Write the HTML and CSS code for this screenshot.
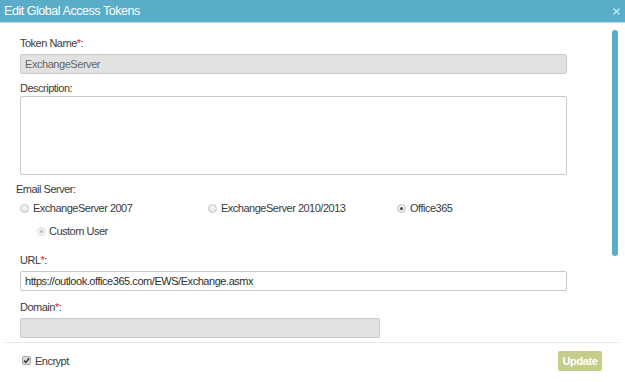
FILE: index.html
```html
<!DOCTYPE html>
<html lang="en">
<head>
    <meta charset="UTF-8">
    <title>Edit Global Access Tokens</title>
    <link rel="stylesheet" href="styles.css">
</head>
<body>
    <div class="dialog">
        <div class="dialog-header">
            <span class="dialog-title">Edit Global Access Tokens</span>
            <svg class="close" width="7" height="7" viewBox="0 0 7 7">
                <path d="M0.5 0.5 L6.5 6.5 M6.5 0.5 L0.5 6.5" stroke="#d5edf4" stroke-width="1.1"/>
            </svg>
        </div>

        <div class="dialog-body">
            <form class="token-form">
                <div class="field">
                    <label>Token Name<span class="req">*</span>:</label>
                    <input type="text" class="disabled" value="ExchangeServer" disabled>
                </div>

                <div class="field field-desc">
                    <label>Description:</label>
                    <textarea></textarea>
                </div>

                <div class="group-label">Email Server:</div>
                <div class="radio-row">
                    <label class="radio"><span class="dot"></span>ExchangeServer 2007</label>
                    <label class="radio"><span class="dot"></span>ExchangeServer 2010/2013</label>
                    <label class="radio"><span class="dot checked"></span>Office365</label>
                </div>
                <div class="radio-sub">
                    <label class="radio"><span class="dot checked muted"></span>Custom User</label>
                </div>

                <div class="field field-url">
                    <label>URL<span class="req">*</span>:</label>
                    <input type="text" value="https://outlook.office365.com/EWS/Exchange.asmx">
                </div>

                <div class="field">
                    <label>Domain<span class="req">*</span>:</label>
                    <input type="text" class="disabled short" disabled>
                </div>
            </form>
            <div class="scrollbar"></div>
        </div>

        <div class="dialog-footer">
            <label class="check">
                <svg class="box" width="9" height="9" viewBox="0 0 9 9">
                    <rect x="0.5" y="0.5" width="8" height="8" rx="1.5" fill="#dcdcdc" stroke="#a8a8a8"/>
                    <path d="M2 4.6 L3.8 6.4 L7.2 2.2" stroke="#333" stroke-width="1.5" fill="none"/>
                </svg>
                Encrypt
            </label>
            <button type="button" class="btn-update">Update</button>
        </div>
    </div>
</body>
</html>
```

FILE: styles.css
```css
body {
    margin: 0;
    padding: 0;
    font-family: 'Liberation Sans', Arial, sans-serif;
    font-size: 11px;
    letter-spacing: -0.5px;
    color: #3a3a3a;
    background: #fff;
}

.dialog {
    width: 625px;
    height: 382px;
    display: flex;
    flex-direction: column;
    background: #fff;
}

.dialog-header {
    height: 22px;
    background: #59adc8;
    border-bottom: 1px solid #b9dde9;
    display: flex;
    align-items: center;
    justify-content: space-between;
    padding: 0 5px 0 4px;
}

.dialog-title {
    color: #fff;
    font-size: 12.5px;
    letter-spacing: -0.45px;
}

.close {
    margin-top: 1px;
}

.dialog-body {
    position: relative;
    height: 319px;
    overflow: hidden;
}

.token-form {
    padding: 13px 0 0 20px;
    width: 547px;
}

.field {
    margin-bottom: 7px;
}

.field label {
    display: block;
    line-height: 14px;
    margin-bottom: 4px;
}

.field-desc label {
    margin-bottom: 1px;
}

.req {
    color: #e02020;
}

input[type="text"] {
    display: block;
    box-sizing: border-box;
    width: 100%;
    height: 20px;
    margin: 0;
    padding: 0 4px;
    border: 1px solid #c8c8c8;
    border-radius: 2px;
    background: #fff;
    font-family: inherit;
    font-size: 11px;
    letter-spacing: -0.45px;
    color: #2e2e2e;
}

input.disabled {
    background: #e2e2e2;
    color: #666;
}

input.short {
    width: 360px;
}

textarea {
    display: block;
    box-sizing: border-box;
    width: 100%;
    height: 79px;
    margin: 0;
    border: 1px solid #c8c8c8;
    border-radius: 2px;
    resize: none;
}

.group-label {
    margin: 0 0 0 -4px;
    line-height: 14px;
}

.radio-row {
    display: grid;
    grid-template-columns: 188px 189px auto;
    margin-top: 5px;
    line-height: 14px;
}

.radio {
    display: flex;
    align-items: center;
}

.dot {
    box-sizing: border-box;
    width: 9px;
    height: 9px;
    border-radius: 50%;
    border: 1px solid #c4c4c4;
    background: radial-gradient(circle at 50% 35%, #fbfbfb, #dcdcdc);
    margin-right: 4px;
    display: flex;
    align-items: center;
    justify-content: center;
}

.dot.checked::after {
    content: "";
    width: 3px;
    height: 3px;
    border-radius: 50%;
    background: #444;
}

.dot.muted {
    border-color: #dedede;
    background: #f2f2f2;
    margin-right: 3px;
}

.dot.muted::after {
    background: #b8b8b8;
}

.radio-sub {
    margin: 9px 0 0 17px;
    line-height: 14px;
}

.field-url {
    margin-top: 15px;
    margin-bottom: 9px;
}

.scrollbar {
    position: absolute;
    top: 7px;
    left: 612px;
    width: 6px;
    height: 226px;
    border-radius: 3px;
    background: #59adc8;
}

.dialog-footer {
    flex: 1;
    margin: 0 6px 0 5px;
    border-top: 1px solid #e6e6e6;
    display: flex;
    align-items: center;
    justify-content: space-between;
    padding: 0 17px 3px 17px;
}

.check {
    display: flex;
    align-items: center;
    gap: 4px;
    margin-top: -1px;
}

.btn-update {
    width: 44px;
    height: 20px;
    padding: 0;
    border: none;
    border-radius: 2px;
    background: #c6cc8a;
    color: #fff;
    font-family: inherit;
    font-size: 11px;
    letter-spacing: -0.4px;
    font-weight: bold;
}
```
